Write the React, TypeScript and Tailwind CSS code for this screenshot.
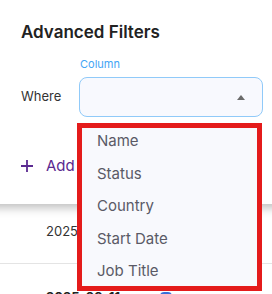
import React from "react";

const columns = ["Name", "Status", "Country", "Start Date", "Job Title"];

function CaretUp() {
  return (
    <svg width="8" height="5" viewBox="0 0 8 5" className="shrink-0">
      <path d="M0 5 L4 0 L8 5 Z" fill="#6b6b6b" />
    </svg>
  );
}

export default function App() {
  return (
    <div
      className="relative w-[272px] h-[294px] overflow-hidden bg-white"
      style={{ fontFamily: "Inter, 'Noto Sans', sans-serif" }}
    >
      {/* table rows behind the dialog */}
      <div className="flex flex-col pt-[136px]">
        <div className="h-16 border-b border-[#e4e4e4]" />
        <div className="h-16 flex items-center pl-[46px] border-b border-[#e4e4e4] text-[13px] text-[#333]">
          2025-09-14
        </div>
        <div className="h-16 flex items-center pl-[46px] pt-[4px] text-[13px] font-bold text-[#222]">
          <span>2025-09-11</span>
          <span className="w-3 h-3 ml-[40px] rounded-sm bg-[#3b6fd8]" />
        </div>
      </div>

      {/* dialog */}
      <div className="absolute left-[-20px] top-[-20px] w-[320px] h-[224px] bg-white rounded-xl shadow-[0_4px_10px_rgba(0,0,0,0.25)]">
        <div className="pl-[41px] pt-[40px]">
          <h2 className="text-[17px] leading-6 font-semibold text-[#222]">
            Advanced Filters
          </h2>
          <div className="flex mt-[13px]">
            <div className="w-[58px] self-end h-10 flex items-center text-[13px] text-[#333]">
              Where
            </div>
            <div className="flex flex-col">
              <div className="text-[11px] leading-[14px] text-[#42a5f5] pl-px">Column</div>
              <div className="mt-[6px] w-[184px] h-10 rounded-lg border border-[#90caf9] bg-[#f8f9fe] flex items-center justify-end pr-[17px]">
                <CaretUp />
              </div>
            </div>
          </div>
          <div className="flex items-center mt-[39px] h-5 text-[#5b2a91]">
            <svg width="12" height="12" viewBox="0 0 12 12">
              <path d="M6 0 V12 M0 6 H12" stroke="#5b2a91" strokeWidth="1.8" />
            </svg>
            <span className="ml-[13px] text-[15px]">Add</span>
          </div>
        </div>
      </div>

      {/* open column menu */}
      <div className="absolute left-[77px] top-[123px] w-[185px] h-[168px] border-[5px] border-[#e41b1b] bg-[#f8f9fd] overflow-hidden">
        <div className="-mt-[3px] flex flex-col">
          {columns.map((c) => (
            <div key={c} className="h-[32.5px] flex items-center pl-[15px] text-[15px] text-[#5a5a66]">
              {c}
            </div>
          ))}
        </div>
      </div>
    </div>
  );
}
